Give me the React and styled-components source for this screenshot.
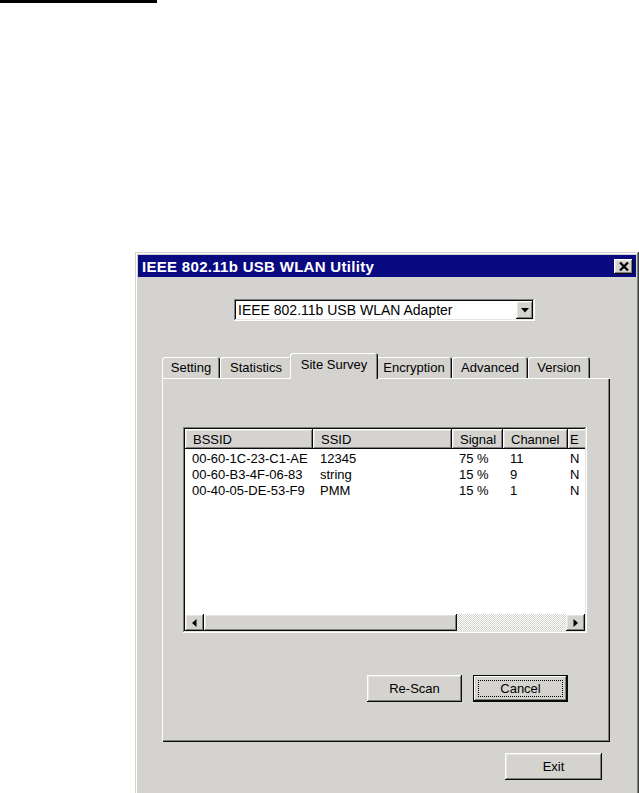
import styled, { createGlobalStyle } from 'styled-components';

const GlobalStyle = createGlobalStyle`
  html, body {
    margin: 0;
    padding: 0;
    background: #ffffff;
    overflow: hidden;
  }

  body {
    font-family: "Liberation Sans", Arial, sans-serif;
    color: #000000;
  }
`;

const face = '#d4d3cf';

const raised = `
  box-shadow: inset -1px -1px #0a0a0a, inset 1px 1px #ffffff,
    inset -2px -2px #808080, inset 2px 2px #e6e5e2;
`;

const sunken = `
  box-shadow: inset -1px -1px #ffffff, inset 1px 1px #808080,
    inset -2px -2px #e6e5e2, inset 2px 2px #0a0a0a;
`;

const tabs = [
  { label: 'Setting', width: 58 },
  { label: 'Statistics', width: 72 },
  { label: 'Site Survey', width: 88, active: true },
  { label: 'Encryption', width: 76 },
  { label: 'Advanced', width: 76 },
  { label: 'Version', width: 62 },
];

// last column runs past the list edge and gets clipped, as in the scan
const columns = [
  { key: 'bssid', label: 'BSSID', width: 128 },
  { key: 'ssid', label: 'SSID', width: 139 },
  { key: 'signal', label: 'Signal', width: 51 },
  { key: 'channel', label: 'Channel', width: 65 },
  { key: 'enc', label: 'E', width: 40, pad: 2 },
];

const networks = [
  { bssid: '00-60-1C-23-C1-AE', ssid: '12345', signal: '75 %', channel: '11', enc: 'N' },
  { bssid: '00-60-B3-4F-06-83', ssid: 'string', signal: '15 %', channel: '9', enc: 'N' },
  { bssid: '00-40-05-DE-53-F9', ssid: 'PMM', signal: '15 %', channel: '1', enc: 'N' },
];

function CloseIcon() {
  return (
    <svg width="10" height="9" viewBox="0 0 10 9">
      <path d="M1 0.5 L9 8.5 M9 0.5 L1 8.5" stroke="#000" strokeWidth="2.2" />
    </svg>
  );
}

function ArrowDown() {
  return (
    <svg width="8" height="5" viewBox="0 0 8 5">
      <polygon points="0,0 8,0 4,4.5" fill="#000" />
    </svg>
  );
}

function ArrowLeft() {
  return (
    <svg width="5" height="8" viewBox="0 0 5 8">
      <polygon points="4.5,0 4.5,8 0,4" fill="#000" />
    </svg>
  );
}

function ArrowRight() {
  return (
    <svg width="5" height="8" viewBox="0 0 5 8">
      <polygon points="0.5,0 0.5,8 5,4" fill="#000" />
    </svg>
  );
}

export default function App() {
  return (
    <Page>
      <GlobalStyle />
      <TopRule />
      <Dialog>
        <TitleBar>
          <Title>IEEE 802.11b USB WLAN Utility</Title>
          <CloseButton>
            <CloseIcon />
          </CloseButton>
        </TitleBar>

        <Body>
          <ComboBox>
            <ComboText>IEEE 802.11b USB WLAN Adapter</ComboText>
            <ComboButton>
              <ArrowDown />
            </ComboButton>
          </ComboBox>

          <TabStrip>
            {tabs.map((tab) => (
              <Tab key={tab.label} $active={tab.active} $width={tab.width}>
                {tab.label}
              </Tab>
            ))}
          </TabStrip>

          <TabPanel>
            <ListView>
              <HeaderRow>
                {columns.map((col) => (
                  <HeaderCell key={col.key} $width={col.width} $pad={col.pad}>
                    {col.label}
                  </HeaderCell>
                ))}
              </HeaderRow>
              <Rows>
                {networks.map((net) => (
                  <Row key={net.bssid}>
                    {columns.map((col) => (
                      <Cell key={col.key} $width={col.width} $pad={col.pad}>
                        {net[col.key]}
                      </Cell>
                    ))}
                  </Row>
                ))}
              </Rows>
              <ScrollBar>
                <ScrollArrow>
                  <ArrowLeft />
                </ScrollArrow>
                <ScrollThumb />
                <ScrollTrack />
                <ScrollArrow>
                  <ArrowRight />
                </ScrollArrow>
              </ScrollBar>
            </ListView>

            <PanelButtons>
              <Button>Re-Scan</Button>
              <Button $default>
                <FocusRing>Cancel</FocusRing>
              </Button>
            </PanelButtons>
          </TabPanel>

          <Footer>
            <Button $wide>Exit</Button>
          </Footer>
        </Body>
      </Dialog>
    </Page>
  );
}

const Page = styled.div`
  width: 639px;
  height: 793px;
  overflow: hidden;
`;

const TopRule = styled.div`
  width: 157px;
  height: 3px;
  background: #000000;
`;

const Dialog = styled.div`
  margin: 249px 0 0 135px;
  width: 504px;
  height: 560px;
  box-sizing: border-box;
  padding: 3px;
  background: ${face};
  box-shadow: inset -1px -1px #404040, inset 1px 1px ${face},
    inset -2px -2px #808080, inset 2px 2px #ffffff;
`;

const TitleBar = styled.div`
  display: flex;
  align-items: center;
  justify-content: space-between;
  height: 22px;
  padding: 0 3px 0 4px;
  background: #0a0a80;
`;

const Title = styled.span`
  color: #ffffff;
  font-weight: bold;
  font-size: 15px;
  letter-spacing: 0.3px;
`;

const CloseButton = styled.div`
  display: flex;
  align-items: center;
  justify-content: center;
  width: 19px;
  height: 15px;
  background: ${face};
  ${raised}
`;

const Body = styled.div`
  display: flex;
  flex-direction: column;
  padding: 22px 0 0 24px;
`;

const ComboBox = styled.div`
  display: flex;
  align-items: center;
  width: 301px;
  height: 22px;
  margin-left: 72px;
  box-sizing: border-box;
  padding: 2px;
  background: #ffffff;
  ${sunken}
`;

const ComboText = styled.span`
  flex: 1;
  padding-left: 2px;
  font-size: 14px;
`;

const ComboButton = styled.div`
  display: flex;
  align-items: center;
  justify-content: center;
  width: 17px;
  height: 18px;
  background: ${face};
  ${raised}
`;

const TabStrip = styled.div`
  display: flex;
  align-items: flex-end;
  height: 25px;
  margin-top: 32px;
`;

const Tab = styled.div`
  position: relative;
  display: flex;
  align-items: center;
  justify-content: center;
  box-sizing: border-box;
  width: ${(p) => p.$width}px;
  height: ${(p) => (p.$active ? 26 : 21)}px;
  margin: ${(p) => (p.$active ? '0 -2px -1px -2px' : '0')};
  padding-bottom: ${(p) => (p.$active ? 3 : 0)}px;
  z-index: ${(p) => (p.$active ? 1 : 0)};
  font-size: 13px;
  background: ${face};
  border-radius: 3px 3px 0 0;
  box-shadow: inset 1px 1px #ffffff, inset -1px 0 #0a0a0a, inset -2px 0 #808080;
`;

const TabPanel = styled.div`
  display: flex;
  flex-direction: column;
  box-sizing: border-box;
  width: 448px;
  height: 364px;
  padding: 49px 0 0 21px;
  background: ${face};
  box-shadow: inset 1px 1px #ffffff, inset -1px -1px #0a0a0a,
    inset -2px -2px #808080;
`;

const ListView = styled.div`
  display: flex;
  flex-direction: column;
  width: 404px;
  height: 206px;
  box-sizing: border-box;
  padding: 2px;
  background: #ffffff;
  overflow: hidden;
  ${sunken}
`;

const HeaderRow = styled.div`
  display: flex;
  height: 20px;
  flex-shrink: 0;
  overflow: hidden;
`;

const HeaderCell = styled.div`
  flex-shrink: 0;
  display: flex;
  align-items: center;
  box-sizing: border-box;
  width: ${(p) => p.$width}px;
  padding-left: ${(p) => p.$pad ?? 8}px;
  font-size: 13px;
  white-space: nowrap;
  overflow: hidden;
  background: ${face};
  ${raised}
`;

const Rows = styled.div`
  flex: 1;
  padding-top: 1px;
  overflow: hidden;
`;

const Row = styled.div`
  display: flex;
  height: 16px;
  align-items: center;
`;

const Cell = styled.div`
  flex-shrink: 0;
  box-sizing: border-box;
  width: ${(p) => p.$width}px;
  padding-left: ${(p) => p.$pad ?? 7}px;
  font-size: 13px;
  white-space: nowrap;
  overflow: hidden;
`;

const ScrollBar = styled.div`
  display: flex;
  height: 17px;
  flex-shrink: 0;
`;

const ScrollArrow = styled.div`
  display: flex;
  align-items: center;
  justify-content: center;
  width: 19px;
  background: ${face};
  ${raised}
`;

const ScrollThumb = styled.div`
  width: 253px;
  background: ${face};
  ${raised}
`;

const ScrollTrack = styled.div`
  flex: 1;
  background: repeating-conic-gradient(#ffffff 0 25%, ${face} 0 50%) 0 0 / 2px 2px;
`;

const PanelButtons = styled.div`
  display: flex;
  gap: 11px;
  margin: 42px 0 0 184px;
`;

const Button = styled.div`
  display: flex;
  align-items: center;
  justify-content: center;
  box-sizing: border-box;
  width: ${(p) => (p.$wide ? 97 : 95)}px;
  height: 27px;
  font-size: 13px;
  background: ${face};
  ${(p) =>
    p.$default
      ? `box-shadow: inset 0 0 0 1px #0a0a0a, inset -2px -2px #0a0a0a, inset 2px 2px #ffffff, inset -3px -3px #808080;`
      : raised}
`;

const FocusRing = styled.span`
  display: flex;
  align-items: center;
  justify-content: center;
  width: calc(100% - 10px);
  height: calc(100% - 10px);
  border: 1px dotted #000000;
  box-sizing: border-box;
`;

const Footer = styled.div`
  display: flex;
  justify-content: flex-end;
  width: 440px;
  margin-top: 11px;
`;
